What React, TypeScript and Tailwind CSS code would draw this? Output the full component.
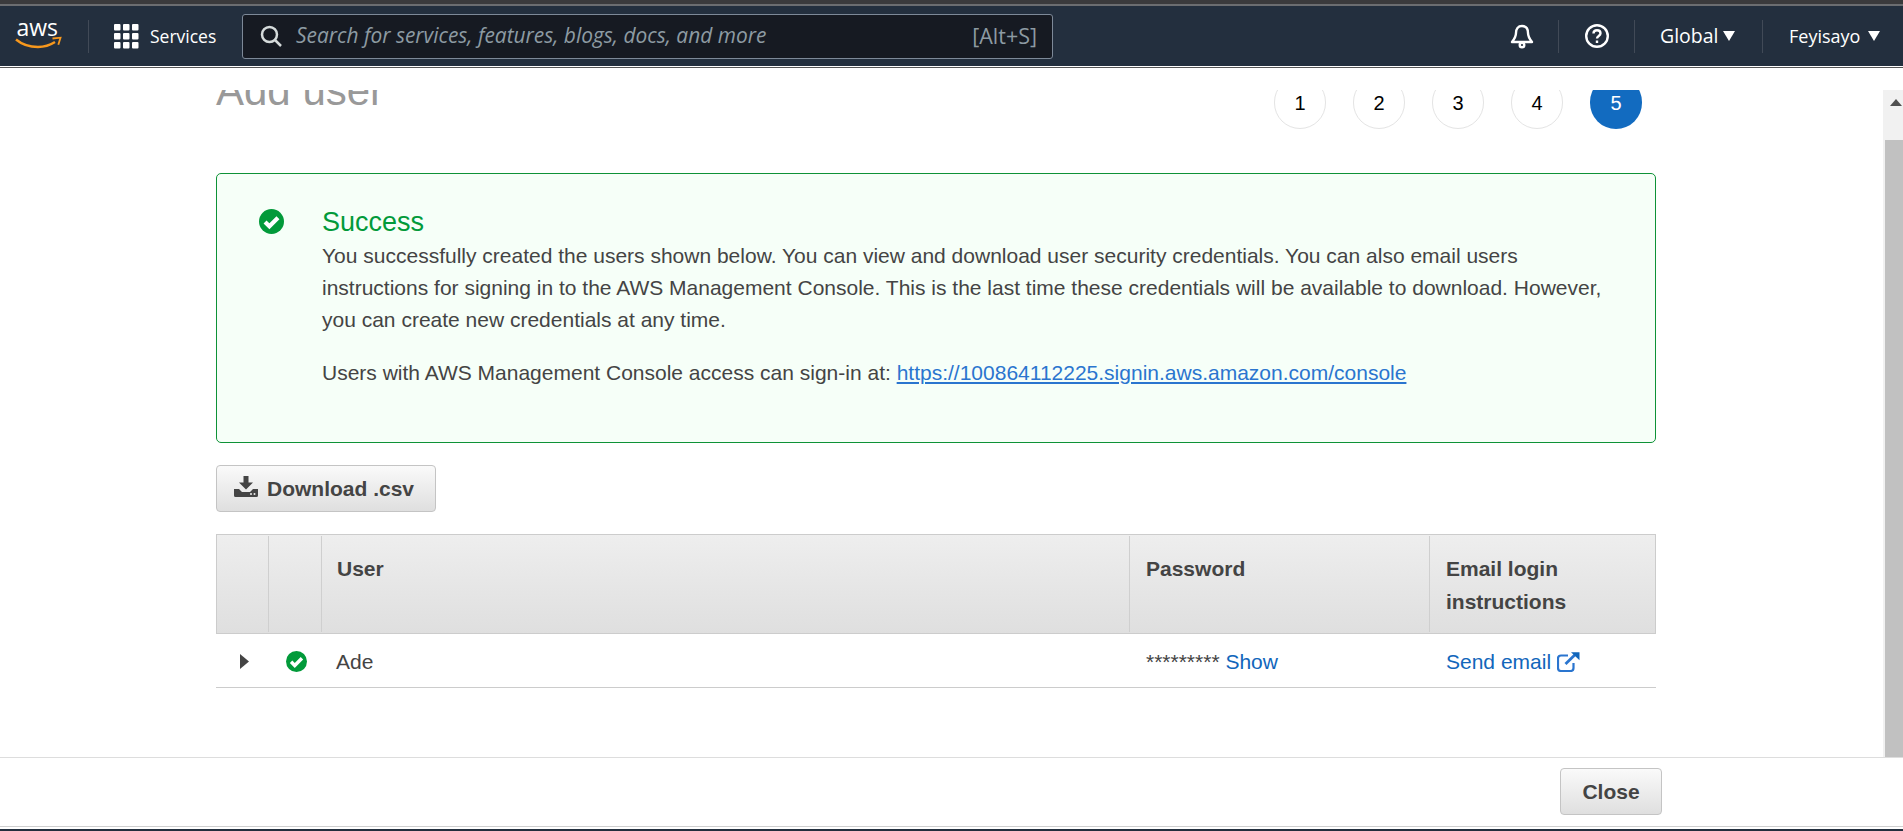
import React from "react";

const sans = "font-['Liberation_Sans',Arial,sans-serif]";
const navFont = "font-['Open_Sans','Noto_Sans',sans-serif]";

function CheckCircle({ size }: { size: number }) {
  return (
    <svg width={size} height={size} viewBox="0 0 24 24" className="shrink-0">
      <circle cx="12" cy="12" r="12" fill="#029a3a" />
      <path d="M5.800 12.400l4.200 4.200 8.200-8.200" fill="none" stroke="#fff" strokeWidth="4" />
    </svg>
  );
}

function Caret() {
  return (
    <svg width="12" height="10" viewBox="0 0 12 10" className="block">
      <path d="M0 0h12L6 10z" fill="#fff" />
    </svg>
  );
}

function Sep() {
  return <div className="h-[33px] w-px bg-[#414a57]" />;
}

function Step({ n, active }: { n: number; active?: boolean }) {
  return (
    <div
      className={
        active
          ? "flex h-[53px] w-[52px] items-center justify-center rounded-full bg-[#126bc0] text-[20px] text-white"
          : "flex h-[53px] w-[52px] items-center justify-center rounded-full border border-[#e4e4e4] bg-white text-[20px] text-black"
      }
    >
      {n}
    </div>
  );
}

export default function App() {
  return (
    <div className={`flex h-[831px] w-[1903px] flex-col overflow-hidden bg-white ${sans}`}>
      <div className="h-1 bg-[#3a3a3c]" />
      <div className="h-[2px] bg-[#6b6d70]" />
      <header className={`flex h-[60px] shrink-0 items-center bg-[#232f3e] text-white ${navFont}`}>
        <svg width="48" height="30" viewBox="0 0 48 30" className="ml-[15px] overflow-visible">
          <path d="M1 18.500c6 5 14 7.500 22 7.500 6 0 12-1.800 17-5" fill="none" stroke="#f7981d" strokeWidth="2.400" />
          <path d="M37.500 17.500l8-.8-2.200 7" fill="none" stroke="#f7981d" strokeWidth="1.800" />
          <text x="1.500" y="15" fill="#fff" fontSize="23" fontFamily="'Open Sans',sans-serif">aws</text>
        </svg>
        <div className="ml-[25px]"><Sep /></div>
        <svg width="25" height="25" viewBox="0 0 25 25" fill="#fff" className="ml-[25px]">
          <rect x="0" y="0" width="6.500" height="6.500" rx="1" />
          <rect x="9" y="0" width="6.500" height="6.500" rx="1" />
          <rect x="18" y="0" width="6.500" height="6.500" rx="1" />
          <rect x="0" y="9" width="6.500" height="6.500" rx="1" />
          <rect x="9" y="9" width="6.500" height="6.500" rx="1" />
          <rect x="18" y="9" width="6.500" height="6.500" rx="1" />
          <rect x="0" y="18" width="6.500" height="6.500" rx="1" />
          <rect x="9" y="18" width="6.500" height="6.500" rx="1" />
          <rect x="18" y="18" width="6.500" height="6.500" rx="1" />
        </svg>
        <span className="ml-[11px] w-[67px] whitespace-nowrap text-[17.500px]">Services</span>
        <div className="ml-[25px] flex h-[45px] w-[811px] items-center rounded-[3px] border border-[#7d8998] bg-[#161a22] pl-[17px] pr-[15px]">
          <svg width="22" height="22" viewBox="0 0 22 22" fill="none" stroke="#d5dbdb" strokeWidth="2.500">
            <circle cx="9.500" cy="9.500" r="7.500" />
            <path d="M15 15l6 6" />
          </svg>
          <span className="ml-[14px] flex-1 whitespace-nowrap text-[20.900px] italic text-[#8d9ba3]">Search for services, features, blogs, docs, and more</span>
          <span className="text-[21.500px] text-[#8d9ba3]">[Alt+S]</span>
        </div>
        <div className="ml-auto flex items-center">
          <svg width="26" height="26" viewBox="0 0 26 26" fill="none" stroke="#fff" strokeWidth="2.400" strokeLinejoin="round">
            <path d="M13 3c-4 0-6 3-6 7 0 4-2 6.500-4 9h20c-2-2.500-4-5-4-9 0-4-2-7-6-7z" />
            <circle cx="13" cy="22" r="2.300" />
          </svg>
          <div className="ml-[23px]"><Sep /></div>
          <svg width="26" height="26" viewBox="0 0 26 26" fill="none" stroke="#fff" strokeWidth="2.400" className="ml-[25px]">
            <circle cx="13" cy="13" r="10.800" />
            <path d="M9.500 10.500c0-2 1.500-3.300 3.500-3.300s3.500 1.300 3.500 3.100c0 2.700-3.500 2.600-3.500 5.200" />
            <path d="M13 17.500v2.500" />
          </svg>
          <div className="ml-[24px]"><Sep /></div>
          <span className="ml-[25px] w-[57px] whitespace-nowrap text-[19.500px]">Global</span>
          <span className="ml-[6px]"><Caret /></span>
          <div className="ml-[27px]"><Sep /></div>
          <span className="ml-[26px] w-[69px] whitespace-nowrap text-[18px]">Feyisayo</span>
          <span className="ml-[10px] mr-[23px]"><Caret /></span>
        </div>
      </header>
      <div className="h-px shrink-0 bg-white" />
      <div className="h-px shrink-0 bg-[#555]" />
      <div className="h-[22px] shrink-0 bg-white" />
      <div className="flex min-h-0 flex-1">
        <main className="min-w-0 flex-1 overflow-hidden">
          <div className="ml-[216px] flex w-[1440px] flex-col text-[21px] text-[#444]">
            <div className="mt-[-14px] flex h-[97px] items-start justify-between pr-[14px]">
              <h1 className="mt-[-10px] text-[42px] leading-[50px] text-[#999]">Add user</h1>
              <div className="flex gap-[27px]">
                <Step n={1} />
                <Step n={2} />
                <Step n={3} />
                <Step n={4} />
                <Step n={5} active />
              </div>
            </div>
            <section className="flex h-[270px] rounded-[5px] border border-[#0e9237] bg-[#f6fff8] pl-[42px] pr-[40px] pt-[31px]">
              <div className="mt-[4px] w-[63px] shrink-0">
                <CheckCircle size={25} />
              </div>
              <div>
                <div className="mb-[1px] text-[27px] leading-[34px] text-[#029a3a]">Success</div>
                <p className="leading-[32px]">
                  You successfully created the users shown below. You can view and download user security credentials. You can also email users instructions for signing in to the AWS Management Console. This is the last time these credentials will be available to download. However, you can create new credentials at any time.
                </p>
                <p className="mt-[21px] leading-[32px]">
                  Users with AWS Management Console access can sign-in at:{" "}
                  <span className="text-[#2a75cf] underline">https://100864112225.signin.aws.amazon.com/console</span>
                </p>
              </div>
            </section>
            <button className="mt-[22px] flex h-[47px] w-[220px] items-center rounded-[4px] border border-[#c4c4c4] bg-gradient-to-b from-[#fafafa] to-[#dfdfdf] pl-[17px] text-[21px] font-bold text-[#444]">
              <svg width="24" height="21" viewBox="0 0 24 21" fill="#444" className="mt-[-5px]">
                <path d="M9.500 0h5v6.500H19l-7 7-7-7h4.500z" />
                <path d="M0 13h5l3 3h8l3-3h5v6.500a1.500 1.500 0 0 1-1.500 1.500h-21A1.500 1.500 0 0 1 0 19.500z" />
                <circle cx="17" cy="18" r="1" fill="#eee" />
                <circle cx="20.500" cy="18" r="1" fill="#eee" />
              </svg>
              <span className="ml-[9px]">Download .csv</span>
            </button>
            <div className="mt-[22px]">
              <div className="flex h-[100px] border border-[#cccccc] bg-gradient-to-b from-[#eeeeee] to-[#dfdfdf] font-bold leading-[33px]">
                <div className="w-[51px]" />
                <div className="my-px w-[53px] border-l border-[#cfcfcf]" />
                <div className="my-px w-[808px] border-l border-[#cfcfcf] pl-[15px] pt-[16px]">User</div>
                <div className="my-px w-[300px] border-l border-[#cfcfcf] pl-[16px] pt-[16px]">Password</div>
                <div className="my-px flex-1 border-l border-[#cfcfcf] pl-[16px] pr-[16px] pt-[16px]">Email login instructions</div>
              </div>
              <div className="flex h-[54px] items-center border-b border-[#cccccc] pt-[2px]">
                <div className="flex w-[52px] justify-center pl-[5px]">
                  <svg width="9" height="15" viewBox="0 0 9 15"><path d="M0 0l9 7.500L0 15z" fill="#444" /></svg>
                </div>
                <div className="flex w-[53px] justify-center pl-[4px]">
                  <CheckCircle size={21} />
                </div>
                <div className="w-[808px] pl-[15px]">Ade</div>
                <div className="w-[300px] pl-[17px]">
                  ********* <span className="text-[#1166bb]">Show</span>
                </div>
                <div className="flex flex-1 items-center pl-[17px] text-[#1166bb]">
                  Send email
                  <svg width="23" height="20" viewBox="0 0 23 20" fill="none" stroke="#2a75cf" strokeWidth="2.200" className="ml-[6px]">
                    <path d="M11 3.500H4a3 3 0 0 0-3 3v9.500a3 3 0 0 0 3 3h9.500a3 3 0 0 0 3-3v-5" />
                    <path d="M8.500 12L19 1.800" strokeWidth="2.800" />
                    <path d="M14 .200h8.500v8z" fill="#1166bb" stroke="none" />
                  </svg>
                </div>
              </div>
            </div>
          </div>
        </main>
        <div className="relative w-[20px] shrink-0 bg-[#f1f1f1]">
          <div className="absolute left-[7px] top-[9px] h-0 w-0 border-x-[6px] border-b-[7px] border-x-transparent border-b-[#505050]" />
          <div className="absolute bottom-0 left-[2px] right-0 top-[50px] bg-[#c1c1c1]" />
        </div>
      </div>
      <footer className="flex h-[69px] shrink-0 items-start justify-end border-t border-[#dddddd] bg-white pr-[241px] pt-[10px]">
        <button className="h-[47px] w-[102px] rounded-[4px] border border-[#c4c4c4] bg-gradient-to-b from-[#fafafa] to-[#dfdfdf] text-[21px] font-bold text-[#444]">
          Close
        </button>
      </footer>
      <div className="h-px shrink-0 bg-[#cfcfcf]" />
      <div className="h-[2px] shrink-0 bg-white" />
      <div className="h-[2px] shrink-0 bg-[#232f3e]" />
    </div>
  );
}
